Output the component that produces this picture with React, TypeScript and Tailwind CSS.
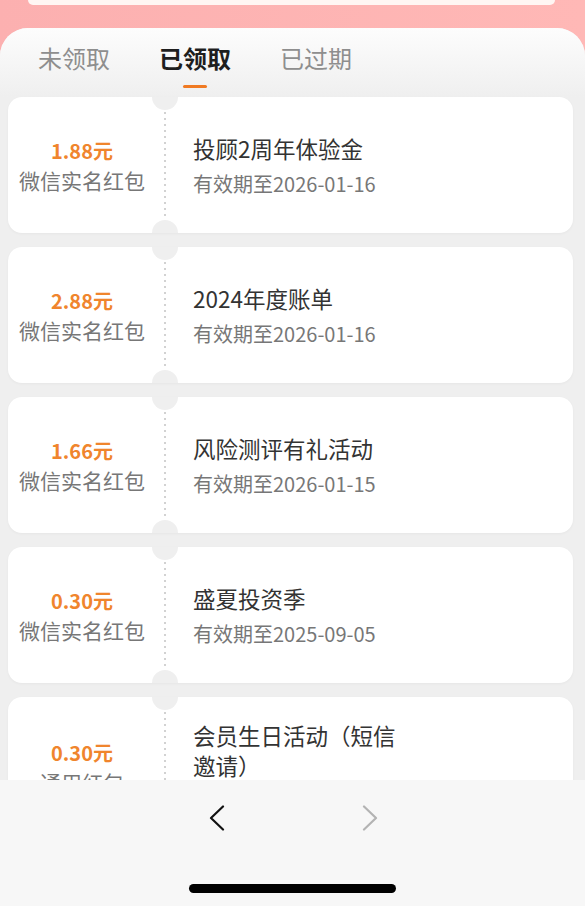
import { ReactNode } from "react";

const FONT = { fontFamily: '"Noto Sans CJK SC", "Noto Sans", sans-serif' };

const COUPONS = [
  { amount: "1.88元", kind: "微信实名红包", title: "投顾2周年体验金", until: "2026-01-16" },
  { amount: "2.88元", kind: "微信实名红包", title: "2024年度账单", until: "2026-01-16" },
  { amount: "1.66元", kind: "微信实名红包", title: "风险测评有礼活动", until: "2026-01-15" },
  { amount: "0.30元", kind: "微信实名红包", title: "盛夏投资季", until: "2025-09-05" },
  { amount: "0.30元", kind: "通用红包", title: "会员生日活动（短信邀请）", until: "2025-08-31" },
];

const TABS = ["未领取", "已领取", "已过期"];

function Coupon({ amount, kind, title, until }: { amount: string; kind: string; title: string; until: string }) {
  return (
    <div className="relative flex items-center min-h-[136px] py-[23px] bg-white rounded-[14px] overflow-hidden shadow-[0_1px_3px_rgba(0,0,0,0.04)]">
      {/* notches + dotted divider */}
      <div className="absolute left-[144px] -top-[13px] w-[26px] h-[26px] rounded-full bg-[#efefef]" />
      <div className="absolute left-[144px] -bottom-[13px] w-[26px] h-[26px] rounded-full bg-[#efefef]" />
      <div className="absolute left-[156px] top-[15px] bottom-[15px] w-[2px] bg-[linear-gradient(to_bottom,#d2d2d2_2px,transparent_2px)] bg-[length:2px_6px]" />

      <div className="w-[157px] pr-[9px] shrink-0 flex flex-col items-center">
        <div className="mt-[1px] text-[20px] leading-[29px] font-bold text-[#f0852d]">{amount}</div>
        <div className="text-[21px] leading-[31px] text-[#777]">{kind}</div>
      </div>
      <div className="pl-[28px] flex flex-col">
        <div className="max-w-[212px] text-[22.5px] leading-[30px] text-[#333]">{title}</div>
        <div className="mt-[8px] text-[20px] leading-[26px] text-[#777]">有效期至{until}</div>
      </div>
    </div>
  );
}

function Chevron({ dir, color }: { dir: "left" | "right"; color: string }) {
  const pts = dir === "left" ? "14,1.5 2,13 14,24.5" : "2,1.5 14,13 2,24.5";
  return (
    <svg width="16" height="26" viewBox="0 0 16 26" fill="none">
      <polyline points={pts} stroke={color} strokeWidth="2.2" strokeLinecap="round" strokeLinejoin="round" />
    </svg>
  );
}

function Tab({ label, active }: { label: string; active?: boolean }): ReactNode {
  return (
    <div className="flex flex-col items-center">
      <span className={`text-[24px] leading-[30px] ${active ? "font-bold text-[#1e1e1e]" : "text-[#8e8e8e]"}`}>{label}</span>
      <span className={`mt-[12px] w-[24px] h-[3px] rounded-full ${active ? "bg-[#f07a22]" : "bg-transparent"}`} />
    </div>
  );
}

export default function App() {
  return (
    <div className="w-[585px] h-[906px] flex flex-col overflow-hidden bg-linear-to-r from-[#fcb0b0] to-[#ffb8b6]" style={FONT}>
      {/* top header remainder */}
      <div className="h-[28px] shrink-0 px-[28px] flex">
        <div className="flex-1 mr-[2px] h-[5px] bg-[#fff6f3] rounded-b-[16px]" />
      </div>

      {/* panel */}
      <div className="flex-1 min-h-0 overflow-hidden rounded-t-[28px] bg-[#efefef] flex flex-col">
        <div className="h-[69px] shrink-0 pt-[15px] pl-[38px] flex gap-[49px] bg-linear-to-b from-[#fdfdfd] to-[#efefef]">
          {TABS.map((t, i) => (
            <Tab key={t} label={t} active={i === 1} />
          ))}
        </div>
        <div className="ml-[8px] mr-[12px] flex flex-col gap-[14px]">
          {COUPONS.map((c, i) => (
            <Coupon key={i} {...c} />
          ))}
        </div>
      </div>

      {/* bottom toolbar */}
      <div className="h-[126px] shrink-0 bg-[#f7f7f7] flex flex-col items-center">
        <div className="mt-[25px] flex gap-[137px] ml-[1px]">
          <Chevron dir="left" color="#111" />
          <Chevron dir="right" color="#b3b3b3" />
        </div>
        <div className="mt-[53px] w-[207px] h-[9px] rounded-full bg-black" />
      </div>
    </div>
  );
}
